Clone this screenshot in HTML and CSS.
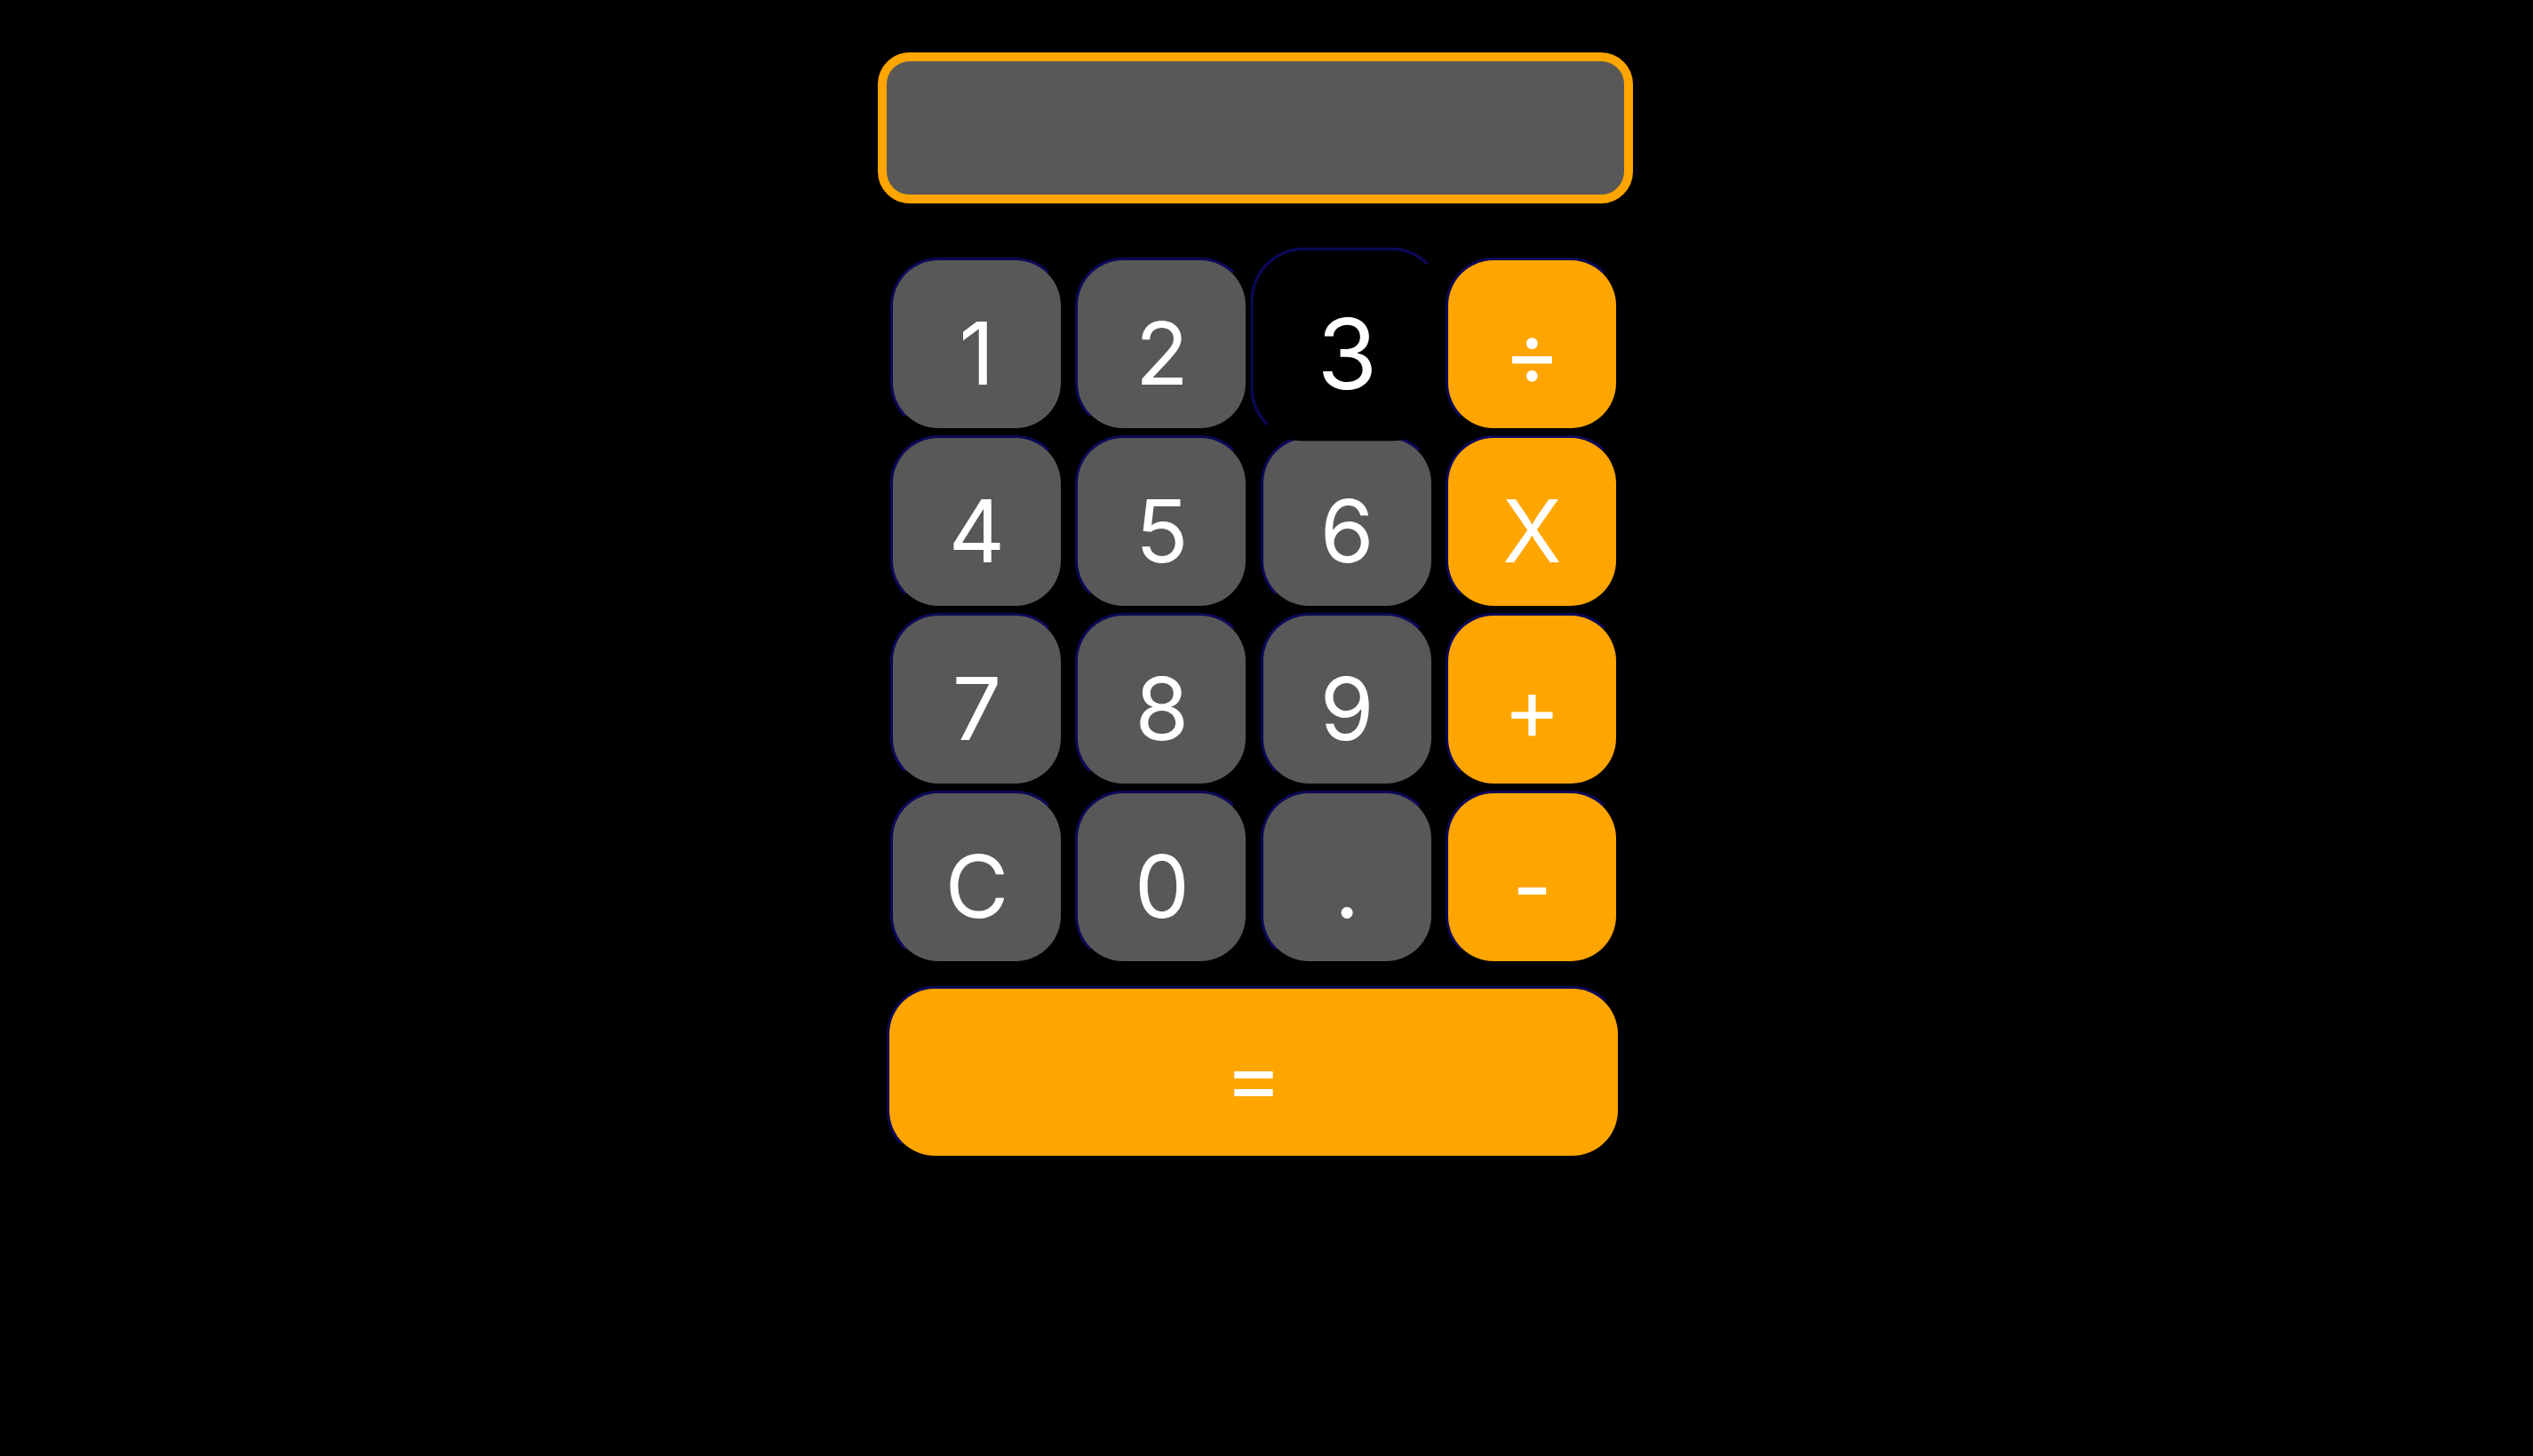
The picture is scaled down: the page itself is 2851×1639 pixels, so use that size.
FILE: index.html
```html
<!DOCTYPE html>
<html lang="en">
<head>
    <meta charset="UTF-8">
    <meta name="viewport" content="width=device-width, initial-scale=1.0">
    <title>Calculator</title>
    <link rel="stylesheet" href="styles.css">
</head>
<body>

    <div class="calculator">
        <!-- Display -->
        <input type="text" id="display" class="display" readonly>

        <!-- Keypad -->
        <div class="keys">
            <button class="key">1</button>
            <button class="key">2</button>
            <button class="key pressed">3</button>
            <button class="key operator">÷</button>

            <button class="key">4</button>
            <button class="key">5</button>
            <button class="key">6</button>
            <button class="key operator">X</button>

            <button class="key">7</button>
            <button class="key">8</button>
            <button class="key">9</button>
            <button class="key operator">+</button>

            <button class="key">C</button>
            <button class="key">0</button>
            <button class="key">.</button>
            <button class="key operator">-</button>
        </div>

        <button class="key equals">=</button>
    </div>

</body>
</html>
```

FILE: styles.css
```css
* {
    margin: 0;
    padding: 0;
    box-sizing: border-box;
    font-family: Inter, "Noto Sans", sans-serif;
}

body {
    background-color: black;
}

.calculator {
    width: 850px;
    padding-right: 26px;
    box-sizing: content-box;
    margin: 59px auto 0;
}

.display {
    display: block;
    width: 850px;
    height: 170px;
    background-color: #585858;
    border: 10px solid #ffa500;
    border-radius: 36px;
    color: white;
    font-size: 80px;
    text-align: right;
    padding: 0 30px;
    outline: none;
}

.keys {
    display: grid;
    grid-template-columns: repeat(4, 195px);
    column-gap: 13.33px;
    row-gap: 5px;
    margin: 61px 0 0 14.5px;
}

.key {
    width: 100%;
    height: 195px;
    background-color: #585858;
    color: white;
    font-size: 98px;
    line-height: 1;
    padding: 20px 0 0;
    border: 3px solid;
    border-color: #0c0858 black black #0c0858;
    border-radius: 54px;
    cursor: pointer;
}

.key:hover,
.key.pressed {
    background-color: black;
    transform: scale(1.12);
}

.operator {
    background-color: #ffa500;
}

.equals {
    display: block;
    width: 826px;
    height: 194px;
    padding-top: 12px;
    margin: 25px 0 0 10.5px;
    background-color: #ffa500;
}
```
